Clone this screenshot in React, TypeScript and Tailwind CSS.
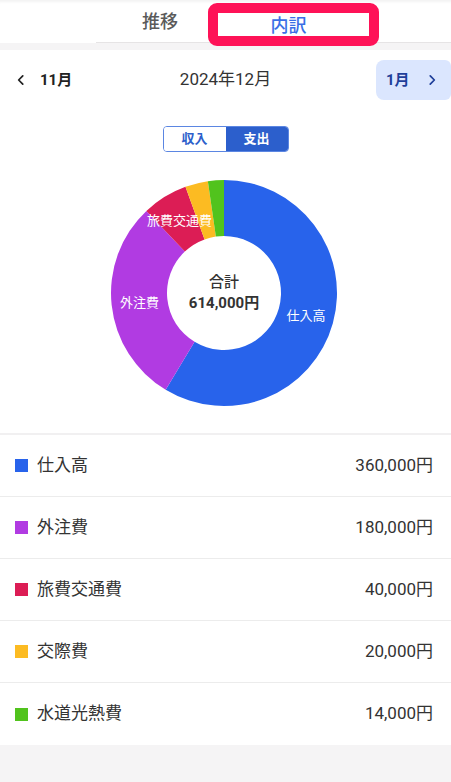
import React from 'react';

const items = [
    { name: '仕入高', value: 360000, color: '#2863eb' },
    { name: '外注費', value: 180000, color: '#b13be2' },
    { name: '旅費交通費', value: 40000, color: '#dc1d55' },
    { name: '交際費', value: 20000, color: '#fcbb22' },
    { name: '水道光熱費', value: 14000, color: '#51c31d' },
];

const total = items.reduce((s, i) => s + i.value, 0);

const fmt = (n: number) => n.toLocaleString('en-US') + '円';

// point on circle, angle in degrees clockwise from top
const pt = (cx: number, cy: number, r: number, deg: number) => {
    const a = (deg * Math.PI) / 180;
    return [cx + r * Math.sin(a), cy - r * Math.cos(a)];
};

const Donut: React.FC = () => {
    const cx = 114;
    const cy = 114;
    const R = 113;
    const r = 57;
    let start = 0;
    const slices = items.map((it) => {
        const sweep = (it.value / total) * 360;
        const end = start + sweep;
        const large = sweep > 180 ? 1 : 0;
        const [x1, y1] = pt(cx, cy, R, start);
        const [x2, y2] = pt(cx, cy, R, end);
        const [x3, y3] = pt(cx, cy, r, end);
        const [x4, y4] = pt(cx, cy, r, start);
        const d = `M${x1} ${y1} A${R} ${R} 0 ${large} 1 ${x2} ${y2} L${x3} ${y3} A${r} ${r} 0 ${large} 0 ${x4} ${y4} Z`;
        const [lx, ly] = pt(cx, cy, (R + r) / 2, start + sweep / 2);
        const s = { ...it, d, lx, ly, sweep };
        start = end;
        return s;
    });

    return (
        <div className="relative w-[228px] h-[228px]">
            <svg width="228" height="228" viewBox="0 0 228 228">
                {slices.map((s) => (
                    <path key={s.name} d={s.d} fill={s.color} />
                ))}
                {slices
                    .filter((s) => s.sweep > 20)
                    .map((s) => (
                        <text
                            key={s.name + 'l'}
                            x={s.lx}
                            y={s.ly}
                            textAnchor="middle"
                            dominantBaseline="central"
                            fill="#ffffff"
                            fontSize="13"
                            fontFamily="Roboto, 'Noto Sans CJK JP', sans-serif"
                        >
                            {s.name}
                        </text>
                    ))}
            </svg>
            <div className="absolute inset-0 flex flex-col items-center justify-center text-[15px] text-[#333] font-medium leading-[21px]">
                <span>合計</span>
                <span className="font-bold">{fmt(total)}</span>
            </div>
        </div>
    );
};

const ChevronLeft = () => (
    <svg width="14" height="14" viewBox="0 0 24 24" fill="none" stroke="currentColor" strokeWidth="3" strokeLinecap="round" strokeLinejoin="round">
        <path d="M15 5 8 12l7 7" />
    </svg>
);

const ChevronRight = () => (
    <svg width="14" height="14" viewBox="0 0 24 24" fill="none" stroke="currentColor" strokeWidth="3" strokeLinecap="round" strokeLinejoin="round">
        <path d="m9 5 7 7-7 7" />
    </svg>
);

export default function App() {
    return (
        <div className="w-[451px] min-h-[782px] bg-[#f5f4f5] font-['Roboto','Noto_Sans_CJK_JP',sans-serif]">
            {/* Tabs */}
            <div className="relative h-[43px] bg-white shadow-[inset_0_4px_3px_-2px_rgba(0,0,0,0.05)]">
                <div className="flex h-[42px] pl-[94px]">
                    <div className="w-[132px] flex items-center justify-center text-[18px] text-[#5a5a5a] font-medium">推移</div>
                    <div className="w-[136px]" />
                </div>
                <div className="ml-[96px] h-px bg-[#e6e4e5]" />
                {/* active tab, with highlight annotation */}
                <div className="absolute left-[208px] top-[3px] w-[171px] h-[43px] border-[10px] border-[#fe1257] rounded-[9px] bg-white flex items-center justify-center pr-[10px] pt-[2px]">
                    <span className="text-[18px] text-[#3a6ee6] font-medium leading-none">内訳</span>
                </div>
            </div>

            <div className="mt-[7px] bg-white">
                {/* Month header */}
                <div className="flex items-center justify-between h-[60px] pt-[10px] pb-[10px]">
                    <div className="flex items-center pl-[14px] w-[120px] text-[#222]">
                        <ChevronLeft />
                        <span className="ml-[12px] text-[15px] font-bold">11月</span>
                    </div>
                    <div className="text-[17px] text-[#333]">2024年12月</div>
                    <div className="w-[120px] flex justify-end">
                        <div className="w-[75px] h-[40px] bg-[#dbe6fe] rounded-l-[8px] rounded-r-[6px] flex items-center pl-[10px] gap-[15px] text-[#1f3f9a]">
                            <span className="text-[15px] font-bold">1月</span>
                            <ChevronRight />
                        </div>
                    </div>
                </div>

                {/* Toggle */}
                <div className="flex justify-center pt-[16px]">
                    <div className="flex w-[126px] h-[26px] border border-[#5b86e2] rounded-[4px] overflow-hidden text-[13px] font-bold">
                        <div className="flex-1 flex items-center justify-center text-[#2d5fcb] bg-white">収入</div>
                        <div className="flex-1 flex items-center justify-center text-white bg-[#2c5fcc]">支出</div>
                    </div>
                </div>

                {/* Chart */}
                <div className="flex justify-center pt-[27px] pb-[26px] pr-[3px]">
                    <Donut />
                </div>

                {/* Legend */}
                <div className="border-t-2 border-[#f1f0f1]">
                    {items.map((it, i) => (
                        <div
                            key={it.name}
                            className={`flex items-center justify-between h-[62px] pl-[15px] pr-[18px] ${i < items.length - 1 ? 'border-b border-[#ececec]' : ''}`}
                        >
                            <div className="flex items-center">
                                <span className="w-[13px] h-[13px]" style={{ backgroundColor: it.color }} />
                                <span className="ml-[9px] text-[17px] text-[#333]">{it.name}</span>
                            </div>
                            <span className="text-[17px] text-[#333]">{fmt(it.value)}</span>
                        </div>
                    ))}
                </div>
            </div>
        </div>
    );
}
